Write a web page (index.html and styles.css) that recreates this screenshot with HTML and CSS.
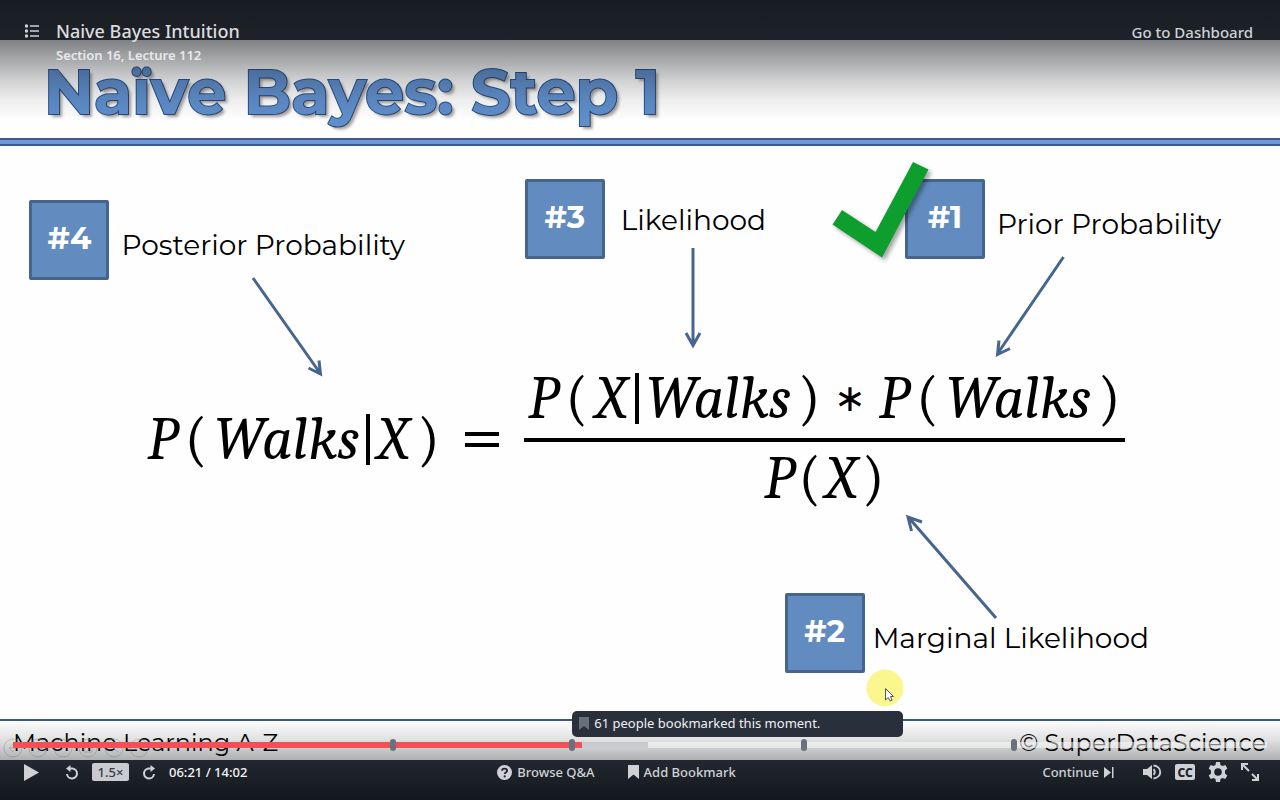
FILE: index.html
```html
<!DOCTYPE html>
<html lang="en">
<head>
<meta charset="utf-8">
<meta name="viewport" content="width=device-width, initial-scale=1">
<title>Naive Bayes Intuition</title>
<link rel="stylesheet" href="styles.css">
</head>
<body>
<main class="player">
  <section class="slide">
    <h1 class="slide-title">Naïve Bayes: Step 1</h1>
    <div class="slide-rule"></div>

    <div class="diagram">
      <div class="node node-posterior"><span class="node-tag">#4</span><span class="node-label">Posterior Probability</span></div>
      <div class="node node-likelihood"><span class="node-tag">#3</span><span class="node-label">Likelihood</span></div>
      <div class="node node-prior"><span class="node-tag">#1</span><span class="node-label">Prior Probability</span></div>
      <div class="node node-marginal"><span class="node-tag">#2</span><span class="node-label">Marginal Likelihood</span></div>

      <div class="equation">
        <div class="term"><i>P</i><span>(</span><i>Walks</i><b></b><i>X</i><span>)</span></div>
        <span class="equals"></span>
        <div class="fraction">
          <div class="term numerator"><i>P</i><span>(</span><i>X</i><b></b><i>Walks</i><span>)</span><span class="times">∗</span><i>P</i><span>(</span><i>Walks</i><span>)</span></div>
          <div class="term denominator"><i>P</i><span>(</span><i>X</i><span>)</span></div>
        </div>
      </div>

      <svg class="arrows" viewBox="0 146 1280 573" preserveAspectRatio="none" aria-hidden="true">
        <g fill="none" stroke="#46658f" stroke-width="3">
          <path d="M253 278 320 373M308.500 368 320.500 374 319 360.500"/>
          <path d="M693 248V344M686 333 693 345.500 700 333"/>
          <path d="M1063.500 257 998 353M999 340.500 997.500 354.500 1010 348.500"/>
          <path d="M996 618 909 518M911.500 531 908 517 922 522"/>
        </g>
        <g class="check"><path fill="#0d9e2d" d="M842 210 875.500 232 913 162 928.500 169.500 882 257.500 832.500 224.500Z"/></g>
        <circle cx="885" cy="688" r="18.500" fill="#f9f78e"/>
        <path d="M885.500 688.500V700L888.300 697.500 890.200 701 892 700.200 890.500 696.500H893.500Z" fill="#fff" stroke="#555" stroke-width="1"/>
      </svg>
    </div>

    <footer class="slide-footer">
      <span>Machine Learning A-Z</span>
      <span>© SuperDataScience</span>
      <svg class="pen-tools" width="150" height="20" viewBox="0 0 150 20" fill="none" stroke="#999" aria-hidden="true">
        <circle cx="10" cy="10" r="9"/><circle cx="35" cy="10" r="9"/><circle cx="60" cy="10" r="9"/><circle cx="85" cy="10" r="9"/><circle cx="111" cy="10" r="9"/><circle cx="136" cy="10" r="9"/>
        <path d="M14 10H6m4-4-4 4 4 4M31 10h8m-4-4 4 4-4 4M57 13l6-6M81 6h8v8h-8zM107 7l8 7M132 10h1m3 0h1m3 0h1"/>
      </svg>
    </footer>
  </section>

  <header class="top-bar">
    <button class="icon-button" aria-label="Course contents">
      <svg width="14" height="14" viewBox="0 0 14 14" fill="currentColor" aria-hidden="true"><circle cx="1.500" cy="2" r="1.700"/><circle cx="1.500" cy="7" r="1.700"/><circle cx="1.500" cy="12" r="1.700"/><path d="M5 1.300h9v1.400H5zM5 6.300h9v1.400H5zM5 11.300h9v1.400H5z"/></svg>
    </button>
    <div class="lecture">
      <h2 class="lecture-title">Naive Bayes Intuition</h2>
      <p class="lecture-section">Section 16, Lecture 112</p>
    </div>
    <a class="dashboard" href="#">Go to Dashboard</a>
  </header>

  <div class="bottom-bar">
    <div class="timeline">
      <input class="seek" type="range" min="0" max="842" value="381" aria-label="Seek">
      <span class="marker" style="left:30.3%"></span>
      <span class="marker" style="left:44.6%"></span>
      <span class="marker" style="left:63.1%"></span>
      <span class="marker" style="left:79.8%"></span>
      <div class="tooltip" style="left:44.6%">
        <svg width="10" height="13" viewBox="0 0 10 13" fill="#69707a" aria-hidden="true"><path d="M0 0h10v13L5 9 0 13z"/></svg>
        61 people bookmarked this moment.
      </div>
    </div>
    <div class="controls">
      <div class="group group-left">
        <button class="icon-button play" aria-label="Play"><svg width="15" height="17" viewBox="0 0 15 17" fill="currentColor" aria-hidden="true"><path d="M0 0 15 8.500 0 17z"/></svg></button>
        <button class="icon-button" aria-label="Rewind"><svg width="14" height="15" viewBox="0 0 14 15" aria-hidden="true"><path d="M4 3.500H7.500A5 5 0 1 1 2 9" fill="none" stroke="currentColor" stroke-width="2"/><path d="M5.500 0v7L1 3.500z" fill="currentColor"/></svg></button>
        <button class="speed">1.5×</button>
        <button class="icon-button" aria-label="Forward"><svg width="14" height="15" viewBox="0 0 14 15" aria-hidden="true"><path d="M10 3.500H6.500A5 5 0 1 0 12 9" fill="none" stroke="currentColor" stroke-width="2"/><path d="M8.500 0v7L13 3.500z" fill="currentColor"/></svg></button>
        <span class="time">06:21 / 14:02</span>
      </div>
      <div class="group group-middle">
        <button class="text-button"><svg width="15" height="15" viewBox="0 0 15 15" aria-hidden="true"><circle cx="7.500" cy="7.500" r="7.500" fill="currentColor"/><path d="M5 5.800C5 4.300 6 3.600 7.500 3.600s2.600.8 2.600 2.100c0 1.600-2.300 1.600-2.300 3.300" fill="none" stroke="#1e222a" stroke-width="1.800"/><circle cx="7.700" cy="11.400" r="1.100" fill="#1e222a"/></svg>Browse Q&amp;A</button>
        <button class="text-button"><svg width="11" height="14" viewBox="0 0 11 14" fill="currentColor" aria-hidden="true"><path d="M0 0h11v14L5.500 9.500 0 14z"/></svg>Add Bookmark</button>
      </div>
      <div class="group group-right">
        <button class="text-button continue">Continue<svg width="10" height="11" viewBox="0 0 10 11" fill="currentColor" aria-hidden="true"><path d="M0 0 7 5.500 0 11zM8 0h1.500v11H8z"/></svg></button>
        <button class="icon-button" aria-label="Volume"><svg width="19" height="16" viewBox="0 0 19 16" aria-hidden="true"><path d="M0 5h4l5-4v14l-5-4H0z" fill="currentColor"/><path d="M10.500 5.300a3.500 3.500 0 0 1 0 5.400M10.500 1.500c9 1 9 12 0 13" fill="none" stroke="currentColor" stroke-width="1.900"/></svg></button>
        <button class="captions" aria-label="Captions">CC</button>
        <button class="icon-button" aria-label="Settings"><svg width="20" height="20" viewBox="0 0 20 20" aria-hidden="true"><path fill="currentColor" fill-rule="evenodd" d="M8 0h4l.5 3 2 1.100L17.300 3l2 3.500L17 8.500v3l2.300 2-2 3.500-2.800-1.100-2 1.100-.5 3H8l-.5-3-2-1.100L2.700 17l-2-3.500L3 11.500v-3l-2.300-2L2.700 3l2.800 1.100 2-1.100zM10 6.200a3.800 3.800 0 1 0 0 7.600 3.800 3.800 0 0 0 0-7.600z"/></svg></button>
        <button class="icon-button" aria-label="Full screen"><svg width="18" height="18" viewBox="0 0 18 18" fill="none" stroke="currentColor" stroke-width="2" aria-hidden="true"><path d="M1 7V1h6M1 1l7 7M17 11v6h-6M17 17l-6-6"/></svg></button>
      </div>
    </div>
  </div>
</main>
</body>
</html>
```
FILE: styles.css
```css
* { box-sizing: border-box; }

body {
  margin: 0;
  font-family: "Noto Sans", "Open Sans", sans-serif;
  background: #29303b;
}

button {
  display: flex;
  align-items: center;
  margin: 0;
  padding: 0;
  border: 0;
  background: none;
  color: inherit;
  font: inherit;
  cursor: pointer;
}

svg { flex: none; }

.player {
  position: relative;
  display: flex;
  flex-direction: column;
  min-height: 100vh;
  padding: 40px 0;
  overflow: hidden;
  color: #cfd1d5;
}

/* Slide */
.slide {
  flex: 1;
  display: flex;
  flex-direction: column;
  background: #fefefe;
  color: #000;
  font-family: Montserrat, Inter, sans-serif;
}

.slide-title {
  margin: 0;
  padding: 12px 44px 0;
  height: 98px;
  font-size: 62px;
  line-height: 80px;
  font-weight: 700;
  color: #5f8ecb;
  -webkit-text-stroke: 2px #245393;
  paint-order: stroke fill;
  text-shadow: 3px 3px 3px rgba(60, 50, 50, .45);
}

.slide-rule {
  height: 8px;
  border: solid #3b5b8c;
  border-width: 2px 0;
  background: #6f98d6;
}

.diagram {
  position: relative;
  flex: 1;
}

.node {
  position: absolute;
  display: flex;
  align-items: center;
  gap: 12px;
  white-space: nowrap;
}

.node-posterior { left: 2.3%; top: 9.4%; }
.node-likelihood { left: 41%; top: 5.8%; gap: 16px; }
.node-prior { left: 70.7%; top: 5.8%; }
.node-marginal { left: 61.3%; top: 78%; gap: 8px; }

.node-tag {
  width: 80px;
  height: 80px;
  border: 3px solid #45658f;
  border-radius: 2px;
  background: #628cbf;
  color: #fff;
  font-size: 31px;
  font-weight: 700;
  line-height: 70px;
  text-align: center;
}

.node-label {
  padding-top: 10px;
  font-size: 28px;
  font-weight: 400;
}

.node-likelihood .node-label { padding-top: 2px; }

.arrows {
  position: absolute;
  inset: 0;
  width: 100%;
  height: 100%;
}

.check { filter: drop-shadow(3px 3px 2px rgba(0, 0, 0, .35)); }

.equation {
  position: absolute;
  left: 11.500%;
  right: 12.100%;
  top: 51.300%;
  transform: translateY(-50%);
  display: flex;
  align-items: center;
  justify-content: space-between;
  font-family: Cambria, "Liberation Serif", serif;
  font-size: 60px;
  line-height: 76px;
}

.term {
  display: flex;
  justify-content: center;
  align-items: center;
  gap: 7px;
}

.term b {
  width: 4px;
  height: 51px;
  background: #000;
}

.equals {
  width: 34px;
  height: 15px;
  border: solid #000;
  border-width: 4px 0;
}

.fraction { width: 61.500%; }

.numerator {
  height: 78px;
  padding-bottom: 4px;
  border-bottom: 4px solid #000;
}

.denominator {
  gap: 4px;
  height: 74px;
}

.times { padding: 0 6px; font-size: 38px; }

.slide-footer {
  position: relative;
  display: flex;
  justify-content: space-between;
  height: 41px;
  padding: 2px 14px 0 13px;
  border-top: 2px solid #3a5a86;
  font-size: 24px;
  font-weight: 400;
  line-height: 40px;
}

.pen-tools {
  position: absolute;
  left: 3px;
  bottom: 2px;
  opacity: .4;
}

/* Top overlay */
.top-bar {
  position: absolute;
  inset: 0 0 auto;
  display: flex;
  align-items: flex-start;
  height: 120px;
  padding: 19px 27px 0 25px;
  background: linear-gradient(rgba(20, 23, 28, .8), rgba(20, 23, 28, .54) 40px, rgba(20, 23, 28, .37) 60px, rgba(20, 23, 28, .2) 80px, rgba(20, 23, 28, .07) 100px, rgba(20, 23, 28, 0));
}

.top-bar .icon-button { height: 24px; }

.lecture { flex: 1; padding-left: 17px; }

.lecture-title {
  margin: 0;
  font-size: 18px;
  font-weight: 500;
  line-height: 24px;
  color: #dcdcde;
}

.lecture-section {
  margin: 0;
  padding-top: 2px;
  font-size: 13px;
  font-weight: 600;
  line-height: 20px;
  color: #e8e8ea;
}

.dashboard {
  color: inherit;
  font-size: 15px;
  font-weight: 500;
  line-height: 26px;
  text-decoration: none;
}

/* Bottom overlay */
.bottom-bar {
  position: absolute;
  inset: auto 0 0;
  height: 80px;
  padding-top: 16px;
  background: linear-gradient(rgba(20, 23, 28, 0), rgba(20, 23, 28, .13) 20px, rgba(20, 23, 28, .34) 40px, rgba(20, 23, 28, .98));
}

.timeline {
  position: relative;
  height: 18px;
  margin: 0 13px;
  display: flex;
  align-items: center;
}

.seek {
  appearance: none;
  width: 100%;
  height: 6px;
  margin: 0;
  background: linear-gradient(90deg, #f25055 45.400%, #c9cbce 45.400% 50.600%, rgba(255, 255, 255, .5) 50.600%);
}

.seek::-webkit-slider-thumb { appearance: none; width: 6px; height: 6px; }

.marker {
  position: absolute;
  top: 3px;
  width: 6px;
  height: 12px;
  margin-left: -3px;
  border-radius: 3px;
  background: #69727c;
}

.tooltip {
  position: absolute;
  bottom: 17px;
  display: flex;
  align-items: center;
  gap: 5px;
  width: 331px;
  height: 26px;
  padding: 0 7px 2px;
  border-radius: 5px;
  background: #29303b;
  color: #f0f0f2;
  font-size: 13px;
}

.controls {
  display: grid;
  grid-template-columns: 1fr auto 1fr;
  align-items: center;
  height: 36px;
  padding: 0 21px 0 24px;
  font-size: 13px;
  font-weight: 500;
}

.group { display: flex; align-items: center; white-space: nowrap; }
.group-left { gap: 13px; }
.group-middle { gap: 33px; padding-right: 50px; }
.group-right { gap: 13px; justify-content: flex-end; }

.play { margin-right: 13px; }
.text-button { gap: 5px; }
.continue { margin-right: 16px; }

.speed {
  justify-content: center;
  width: 37px;
  height: 18px;
  border-radius: 2px;
  background: #c9cbd0;
  color: #343a45;
}

.time { color: #f4f4f5; }

.captions {
  justify-content: center;
  width: 20px;
  height: 16px;
  border-radius: 2px;
  background: #cfd1d5;
  color: #20242c;
  font-size: 12px;
  font-weight: 800;
}
```
